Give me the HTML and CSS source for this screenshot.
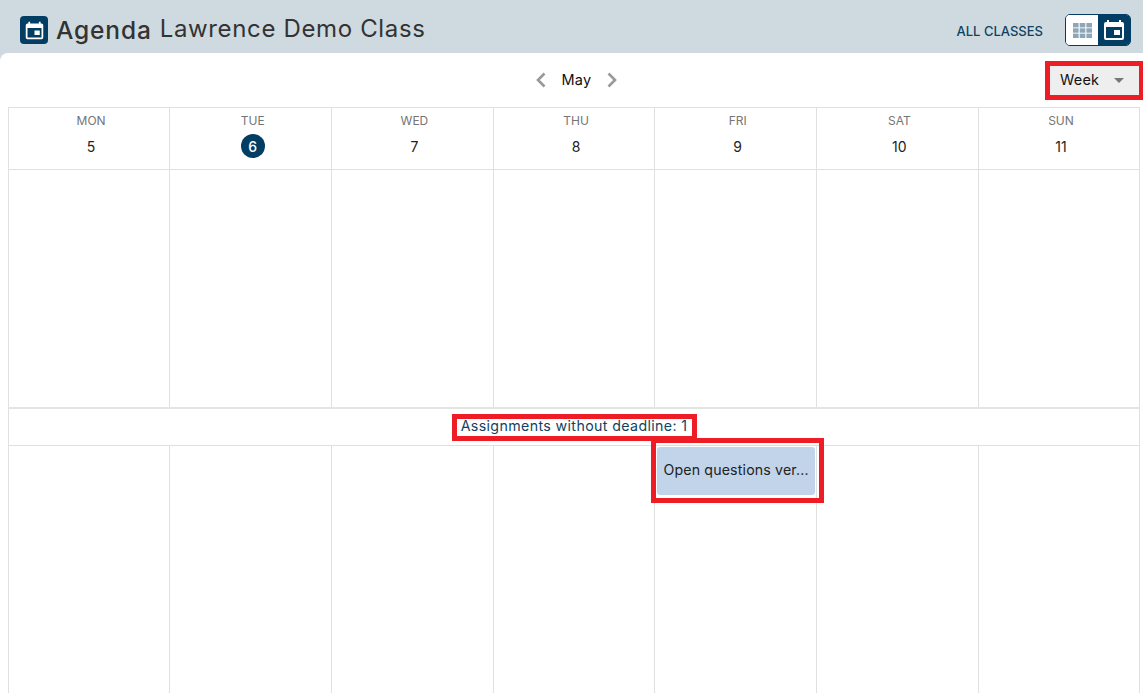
FILE: index.html
```html
<!DOCTYPE html>
<html lang="en">
<head>
<meta charset="utf-8">
<title>Agenda</title>
<link rel="stylesheet" href="styles.css">
</head>
<body>
<header class="topbar">
  <div class="title-group">
    <span class="app-icon">
      <svg width="21" height="21" viewBox="0 0 24 24"><path fill="#fff" fill-rule="evenodd" d="M17 2v2H7V2H5v2H4a2 2 0 0 0-2 2v14a2 2 0 0 0 2 2h16a2 2 0 0 0 2-2V6a2 2 0 0 0-2-2h-1V2h-2zM4 9h16v11H4V9zm8 3v5h6v-5h-6z"/></svg>
    </span>
    <span class="title">Agenda</span>
    <span class="subtitle">Lawrence Demo Class</span>
  </div>
  <div class="top-actions">
    <a class="all-classes">ALL CLASSES</a>
    <div class="view-toggle">
      <span class="toggle-btn">
        <svg width="19" height="15" viewBox="0 0 19 15"><g fill="#8fa6b8"><rect x="0" y="0" width="5.6" height="4.4"/><rect x="6.7" y="0" width="5.6" height="4.4"/><rect x="13.400" y="0" width="5.6" height="4.4"/><rect x="0" y="5.300" width="5.6" height="4.4"/><rect x="6.7" y="5.300" width="5.6" height="4.4"/><rect x="13.400" y="5.300" width="5.6" height="4.4"/><rect x="0" y="10.600" width="5.6" height="4.4"/><rect x="6.7" y="10.600" width="5.6" height="4.4"/><rect x="13.400" y="10.600" width="5.6" height="4.4"/></g></svg>
      </span>
      <span class="toggle-btn toggle-active">
        <svg width="24" height="24" viewBox="0 0 24 24"><path fill="#fff" fill-rule="evenodd" d="M17 2v2H7V2H5v2H4a2 2 0 0 0-2 2v14a2 2 0 0 0 2 2h16a2 2 0 0 0 2-2V6a2 2 0 0 0-2-2h-1V2h-2zM4 9h16v11H4V9zm8 3v5h6v-5h-6z"/></svg>
      </span>
    </div>
  </div>
</header>
<main class="panel">
  <div class="toolbar">
    <div class="month-nav">
      <svg class="chev" width="10" height="16" viewBox="0 0 10 16"><path d="M8.5 1.500 2 8l6.500 6.500" fill="none" stroke="#999" stroke-width="2.6"/></svg>
      <span class="month">May</span>
      <svg class="chev" width="10" height="16" viewBox="0 0 10 16"><path d="M1.500 1.500 8 8l-6.500 6.500" fill="none" stroke="#999" stroke-width="2.6"/></svg>
    </div>
    <div class="view-select">
      <span>Week</span>
      <span class="caret"></span>
    </div>
  </div>
  <div class="calendar">
    <div class="days">
      <div class="day"><span class="dow">MON</span><span class="num">5</span></div>
      <div class="day"><span class="dow">TUE</span><span class="num today">6</span></div>
      <div class="day"><span class="dow">WED</span><span class="num">7</span></div>
      <div class="day"><span class="dow">THU</span><span class="num">8</span></div>
      <div class="day"><span class="dow">FRI</span><span class="num">9</span></div>
      <div class="day"><span class="dow">SAT</span><span class="num">10</span></div>
      <div class="day"><span class="dow">SUN</span><span class="num">11</span></div>
    </div>
    <div class="cells cells-top">
      <div class="cell"></div><div class="cell"></div><div class="cell"></div><div class="cell"></div><div class="cell"></div><div class="cell"></div><div class="cell"></div>
    </div>
    <div class="no-deadline"><span class="no-deadline-label">Assignments without deadline: 1</span></div>
    <div class="cells cells-bottom">
      <div class="cell"></div><div class="cell"></div><div class="cell"></div><div class="cell"></div>
      <div class="cell cell-event"><div class="event">Open questions ver...</div></div>
      <div class="cell"></div><div class="cell"></div>
    </div>
  </div>
</main>
</body>
</html>
```
FILE: styles.css
```css
* { box-sizing: border-box; }
html, body { margin: 0; padding: 0; height: 693px; overflow: hidden; }
body {
  background: #cfdae0;
  font-family: "Inter", "Liberation Sans", sans-serif;
  color: #222;
}
.topbar {
  height: 53px;
  display: flex;
  align-items: center;
  justify-content: space-between;
  padding: 7px 12px 0 20px;
  background: #cfdae0;
}
.title-group { display: flex; align-items: center; }
.app-icon {
  width: 28px;
  height: 28px;
  border-radius: 4px;
  background: #023e63;
  display: flex;
  align-items: center;
  justify-content: center;
}
.title { margin-left: 8px; font-size: 24.5px; font-weight: 500; letter-spacing: 0.85px; color: #333; }
.subtitle { margin-left: 8px; margin-top: -3px; font-size: 24px; letter-spacing: 0.65px; color: #333; }
.top-actions { display: flex; align-items: center; }
.all-classes { margin: 1px 22px 0 0; font-size: 13px; font-weight: 500; color: #0f4262; }
.view-toggle {
  display: flex;
  width: 66px;
  height: 32px;
  border: 1px solid #023e63;
  border-radius: 5px;
  overflow: hidden;
}
.toggle-btn { flex: 1; display: flex; align-items: center; justify-content: center; background: #fff; }
.toggle-active { background: #023e63; }
.panel { height: 640px; background: #fff; border-top-left-radius: 8px; overflow: hidden; }
.toolbar {
  position: relative;
  height: 54px;
  display: flex;
  align-items: center;
  justify-content: center;
}
.month-nav { display: flex; align-items: center; gap: 15px; margin-left: 10px; }
.month { padding-bottom: 1px; font-size: 14.5px; letter-spacing: 0.3px; color: #111; }
.view-select {
  position: absolute;
  left: 1050px;
  top: 13px;
  width: 89px;
  height: 29px;
  padding: 0 15px 2px 10px;
  background: #eee;
  outline: 5px solid #ee1c25;
  display: flex;
  align-items: center;
  justify-content: space-between;
  font-size: 14.5px;
  letter-spacing: 0.2px;
  color: #111;
}
.caret {
  width: 0;
  height: 0;
  margin-top: 2px;
  border-left: 5px solid transparent;
  border-right: 5px solid transparent;
  border-top: 5px solid #777;
}
.calendar {
  margin-left: 7.8px;
  width: 1132.55px;
  border-top: 1px solid #e0e0e0;
  border-right: 1px solid #e0e0e0;
}
.days, .cells { display: grid; grid-template-columns: repeat(7, 1fr); }
.days { height: 62px; border-bottom: 1px solid #e0e0e0; }
.day {
  display: flex;
  flex-direction: column;
  align-items: center;
  border-left: 1px solid #e0e0e0;
  padding: 5px 0 0 4px;
}
.dow { font-size: 12px; line-height: 16px; color: #757575; }
.num {
  margin-top: 5px;
  width: 24px;
  height: 24px;
  display: flex;
  align-items: center;
  justify-content: center;
  font-size: 14px;
  color: #222;
}
.today { background: #023e63; color: #fff; font-weight: 500; border-radius: 50%; }
.cell { border-left: 1px solid #e0e0e0; }
.cells-top { height: 237px; }
.no-deadline {
  height: 39px;
  border-top: 2px solid #e4e4e4;
  border-bottom: 1px solid #e0e0e0;
  border-left: 1px solid #e0e0e0;
  display: flex;
  align-items: center;
  justify-content: center;
}
.no-deadline-label {
  padding: 0 4px;
  height: 17px;
  line-height: 13px;
  font-size: 14.2px;
  letter-spacing: 0.38px;
  color: #0f4262;
  background: #fff;
  outline: 5px solid #ee1c25;
  white-space: nowrap;
}
.cells-bottom { height: 260px; }
.cell-event { position: relative; }
.event {
  position: absolute;
  left: 2px;
  top: 1px;
  width: 158px;
  height: 48px;
  padding: 0 0 3px 6px;
  display: flex;
  align-items: center;
  background: #c1d4ea;
  border-radius: 3px;
  font-size: 14.2px;
  letter-spacing: 0.15px;
  color: #222;
  white-space: nowrap;
}
.event::after {
  content: "";
  position: absolute;
  left: -1px;
  top: -4px;
  width: 163px;
  height: 55px;
  outline: 5px solid #ee1c25;
  pointer-events: none;
}
```
